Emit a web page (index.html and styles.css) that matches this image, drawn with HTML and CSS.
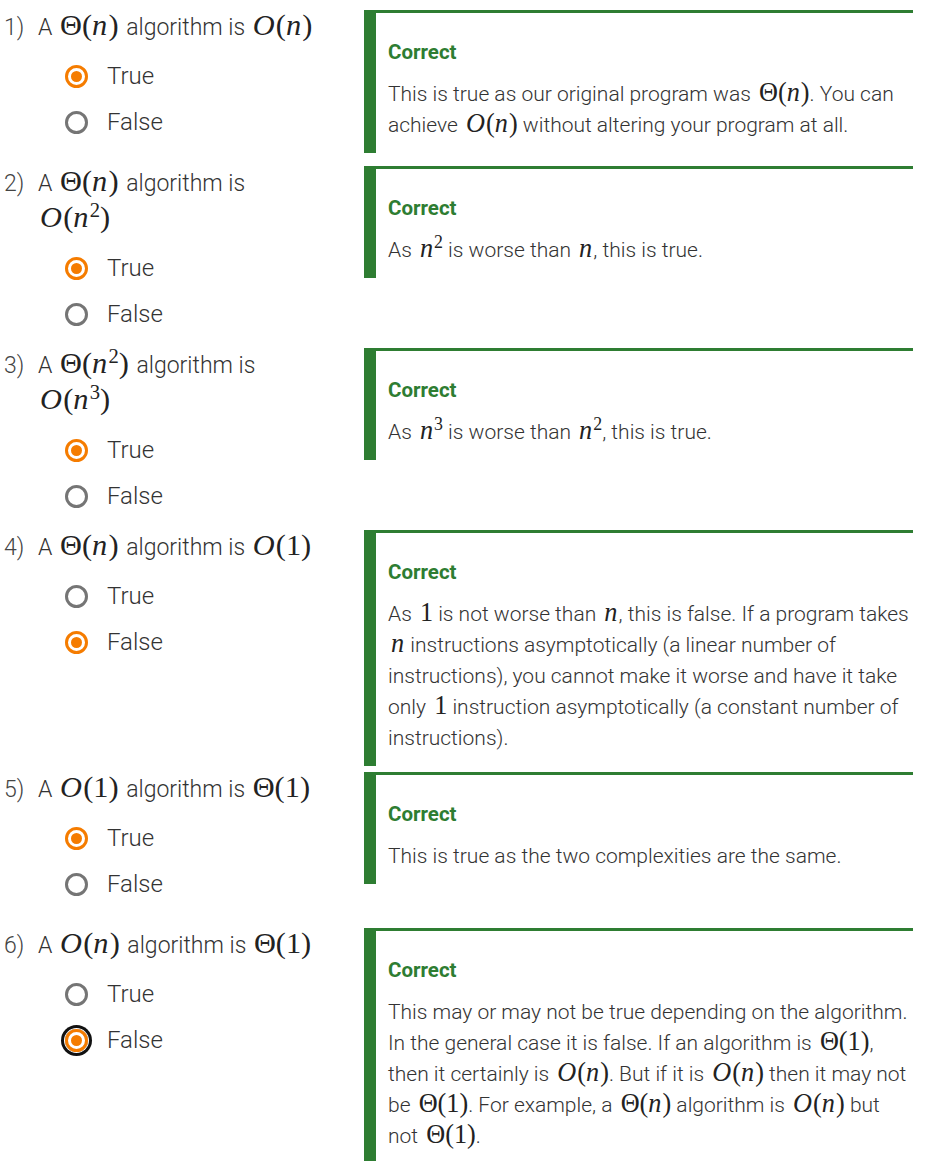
FILE: index.html
```html
<!DOCTYPE html>
<html lang="en">
<head>
<meta charset="utf-8">
<title>Quiz</title>
<link rel="stylesheet" href="styles.css">
</head>
<body>
<div class="page">

  <div class="row">
    <div class="question">
      <div class="q-head"><span class="q-num">1)</span><span class="q-text">A <span class="m"><span class="mu">Θ(</span><i>n</i><span class="mu">)</span></span> algorithm is <span class="m"><i>O</i><span class="mu">(</span><i>n</i><span class="mu">)</span></span></span></div>
      <div class="options">
        <div class="opt"><span class="radio checked"></span><span class="lbl">True</span></div>
        <div class="opt"><span class="radio"></span><span class="lbl">False</span></div>
      </div>
    </div>
    <div class="feedback">
      <div class="fb-title">Correct</div>
      <p class="fb-text">This is true as our original program was <span class="m"><span class="mu">Θ(</span><i>n</i><span class="mu">)</span></span>. You can achieve <span class="m"><i>O</i><span class="mu">(</span><i>n</i><span class="mu">)</span></span> without altering your program at all.</p>
    </div>
  </div>

  <div class="row">
    <div class="question">
      <div class="q-head"><span class="q-num">2)</span><span class="q-text">A <span class="m"><span class="mu">Θ(</span><i>n</i><span class="mu">)</span></span> algorithm is <span class="m"><i>O</i><span class="mu">(</span><i>n</i><sup>2</sup><span class="mu">)</span></span></span></div>
      <div class="options">
        <div class="opt"><span class="radio checked"></span><span class="lbl">True</span></div>
        <div class="opt"><span class="radio"></span><span class="lbl">False</span></div>
      </div>
    </div>
    <div class="feedback">
      <div class="fb-title">Correct</div>
      <p class="fb-text">As <span class="m"><i>n</i><sup>2</sup></span> is worse than <span class="m"><i>n</i></span>, this is true.</p>
    </div>
  </div>

  <div class="row">
    <div class="question">
      <div class="q-head"><span class="q-num">3)</span><span class="q-text">A <span class="m"><span class="mu">Θ(</span><i>n</i><sup>2</sup><span class="mu">)</span></span> algorithm is <span class="m"><i>O</i><span class="mu">(</span><i>n</i><sup>3</sup><span class="mu">)</span></span></span></div>
      <div class="options">
        <div class="opt"><span class="radio checked"></span><span class="lbl">True</span></div>
        <div class="opt"><span class="radio"></span><span class="lbl">False</span></div>
      </div>
    </div>
    <div class="feedback">
      <div class="fb-title">Correct</div>
      <p class="fb-text">As <span class="m"><i>n</i><sup>3</sup></span> is worse than <span class="m"><i>n</i><sup>2</sup></span>, this is true.</p>
    </div>
  </div>

  <div class="row">
    <div class="question">
      <div class="q-head"><span class="q-num">4)</span><span class="q-text">A <span class="m"><span class="mu">Θ(</span><i>n</i><span class="mu">)</span></span> algorithm is <span class="m"><i>O</i><span class="mu">(1)</span></span></span></div>
      <div class="options">
        <div class="opt"><span class="radio"></span><span class="lbl">True</span></div>
        <div class="opt"><span class="radio checked"></span><span class="lbl">False</span></div>
      </div>
    </div>
    <div class="feedback">
      <div class="fb-title">Correct</div>
      <p class="fb-text">As <span class="m"><span class="mu">1</span></span> is not worse than <span class="m"><i>n</i></span>, this is false. If a program takes <span class="m"><i>n</i></span> instructions asymptotically (a linear number of instructions), you cannot make it worse and have it take only <span class="m"><span class="mu">1</span></span> instruction asymptotically (a constant number of instructions).</p>
    </div>
  </div>

  <div class="row">
    <div class="question">
      <div class="q-head"><span class="q-num">5)</span><span class="q-text">A <span class="m"><i>O</i><span class="mu">(1)</span></span> algorithm is <span class="m"><span class="mu">Θ(1)</span></span></span></div>
      <div class="options">
        <div class="opt"><span class="radio checked"></span><span class="lbl">True</span></div>
        <div class="opt"><span class="radio"></span><span class="lbl">False</span></div>
      </div>
    </div>
    <div class="feedback">
      <div class="fb-title">Correct</div>
      <p class="fb-text">This is true as the two complexities are the same.</p>
    </div>
  </div>

  <div class="row">
    <div class="question">
      <div class="q-head"><span class="q-num">6)</span><span class="q-text">A <span class="m"><i>O</i><span class="mu">(</span><i>n</i><span class="mu">)</span></span> algorithm is <span class="m"><span class="mu">Θ(1)</span></span></span></div>
      <div class="options">
        <div class="opt"><span class="radio"></span><span class="lbl">True</span></div>
        <div class="opt"><span class="radio checked focused"></span><span class="lbl">False</span></div>
      </div>
    </div>
    <div class="feedback">
      <div class="fb-title">Correct</div>
      <p class="fb-text">This may or may not be true depending on the algorithm. In the general case it is false. If an algorithm is <span class="m"><span class="mu">Θ(1)</span></span>, then it certainly is <span class="m"><i>O</i><span class="mu">(</span><i>n</i><span class="mu">)</span></span>. But if it is <span class="m"><i>O</i><span class="mu">(</span><i>n</i><span class="mu">)</span></span> then it may not be <span class="m"><span class="mu">Θ(1)</span></span>. For example, a <span class="m"><span class="mu">Θ(</span><i>n</i><span class="mu">)</span></span> algorithm is <span class="m"><i>O</i><span class="mu">(</span><i>n</i><span class="mu">)</span></span> but not <span class="m"><span class="mu">Θ(1)</span></span>.</p>
    </div>
  </div>

</div>
</body>
</html>
```

FILE: styles.css
```css
html, body {
  margin: 0;
  padding: 0;
  background: #ffffff;
}

body {
  font-family: Roboto, "Liberation Sans", sans-serif;
  font-weight: 300;
  color: #333333;
}

.page {
  padding: 10px 20px 0 4px;
  display: flex;
  flex-direction: column;
  gap: 6px;
}

.row {
  display: grid;
  grid-template-columns: 360px 549px;
  align-items: start;
}

.question {
  min-height: 150px;
  padding-bottom: 5px;
  box-sizing: border-box;
}

.q-head {
  display: flex;
  font-size: 23px;
  line-height: 36px;
  padding-right: 43px;
}

.q-num {
  flex: 0 0 34px;
  color: #444;
}

.q-text {
  flex: 1;
}

.m {
  font-family: "Liberation Serif", "DejaVu Serif", serif;
  font-size: 1.32em;
  font-weight: 400;
  color: #222;
  line-height: 1;
  white-space: nowrap;
  padding: 0 2px;
}

.m i {
  font-style: italic;
  padding-right: 0.04em;
}

.m sup {
  font-size: 0.68em;
  font-style: normal;
  line-height: 0;
  vertical-align: 0.5em;
}

.options {
  margin-top: 7px;
  padding-left: 61px;
}

.opt {
  display: flex;
  align-items: center;
  height: 46px;
  font-size: 24px;
}

.radio {
  width: 23px;
  height: 23px;
  box-sizing: border-box;
  border: 3px solid #757575;
  border-radius: 50%;
  margin-right: 19px;
  display: flex;
  align-items: center;
  justify-content: center;
  flex: 0 0 auto;
}

.radio.checked {
  border-color: #f57c00;
}

.radio.checked::after {
  content: "";
  width: 11px;
  height: 11px;
  border-radius: 50%;
  background: #f57c00;
}

.radio.focused {
  box-shadow: 0 0 0 1px #ffffff, 0 0 0 4px #111111;
}

.feedback {
  border-top: 3px solid #2e7d32;
  border-left: 12px solid #2e7d32;
  padding: 23px 0 12px 12px;
}

.fb-title {
  color: #2e7d32;
  font-weight: 700;
  font-size: 20.5px;
  line-height: 32px;
}

.fb-text {
  margin: 11px 0 0;
  font-size: 21px;
  line-height: 31px;
}

.fb-text .m {
  font-size: 1.25em;
  padding: 0 0 0 3px;
}
```
